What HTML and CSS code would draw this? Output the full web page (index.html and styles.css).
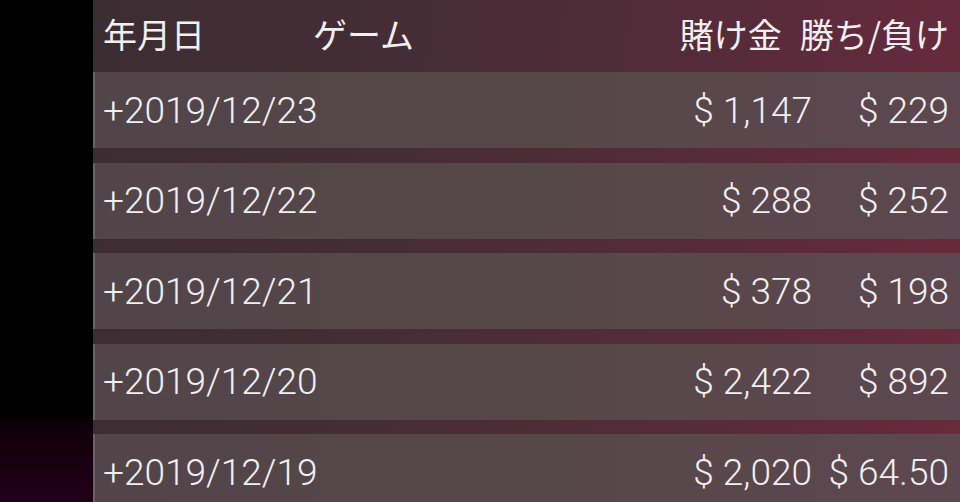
FILE: index.html
```html
<!DOCTYPE html>
<html lang="ja">
<head>
<meta charset="utf-8">
<title>履歴</title>
<link rel="stylesheet" href="styles.css">
</head>
<body>
<div class="app">
  <aside class="side"></aside>
  <main class="main">
    <div class="head">
      <span class="h-date">年月日</span>
      <span class="h-game">ゲーム</span>
      <span class="h-bet">賭け金</span>
      <span class="h-win">勝ち/負け</span>
    </div>
    <div class="row"><span class="date">+2019/12/23</span><span class="bet">$ 1,147</span><span class="win">$ 229</span></div>
    <div class="row"><span class="date">+2019/12/22</span><span class="bet">$ 288</span><span class="win">$ 252</span></div>
    <div class="row"><span class="date">+2019/12/21</span><span class="bet">$ 378</span><span class="win">$ 198</span></div>
    <div class="row"><span class="date">+2019/12/20</span><span class="bet">$ 2,422</span><span class="win">$ 892</span></div>
    <div class="row"><span class="date">+2019/12/19</span><span class="bet">$ 2,020</span><span class="win">$ 64.50</span></div>
  </main>
</div>
</body>
</html>
```

FILE: styles.css
```css
html, body {
  margin: 0;
  padding: 0;
  width: 960px;
  height: 502px;
  overflow: hidden;
  background: #000;
}
.app {
  display: flex;
  width: 960px;
  height: 502px;
  font-family: Roboto, "Liberation Sans", "Noto Sans CJK JP", sans-serif;
  color: #f2eff0;
}
.side {
  width: 93px;
  flex: none;
  background: linear-gradient(180deg, #000 0%, #000 82%, #12000a 86%, #210019 100%);
}
.main {
  flex: 1;
  display: flex;
  flex-direction: column;
  background: linear-gradient(95deg, #3c2d33 0%, #452d35 35%, #562b3a 70%, #692a3e 100%);
  overflow: hidden;
}
.head {
  height: 72px;
  flex: none;
  display: flex;
  align-items: center;
  padding: 0 11px 6px 10px;
  box-sizing: border-box;
  font-family: "Noto Sans CJK JP", sans-serif;
  font-size: 34px;
  font-weight: 400;
}
.h-date { width: 210px; }
.h-bet { margin-left: auto; margin-right: 18px; }
.row {
  height: 76px;
  flex: none;
  margin-bottom: 14.5px;
  display: grid;
  grid-template-columns: 1fr auto 137px;
  align-items: center;
  padding: 0 11px 0 10px;
  background: linear-gradient(90deg, #514549 0%, #564749 50%, #5d4750 100%);
  box-shadow: inset 2px 0 0 rgba(140,132,136,0.45);
  font-size: 37px;
  font-weight: 300;
}
.bet, .win { text-align: right; }
```
